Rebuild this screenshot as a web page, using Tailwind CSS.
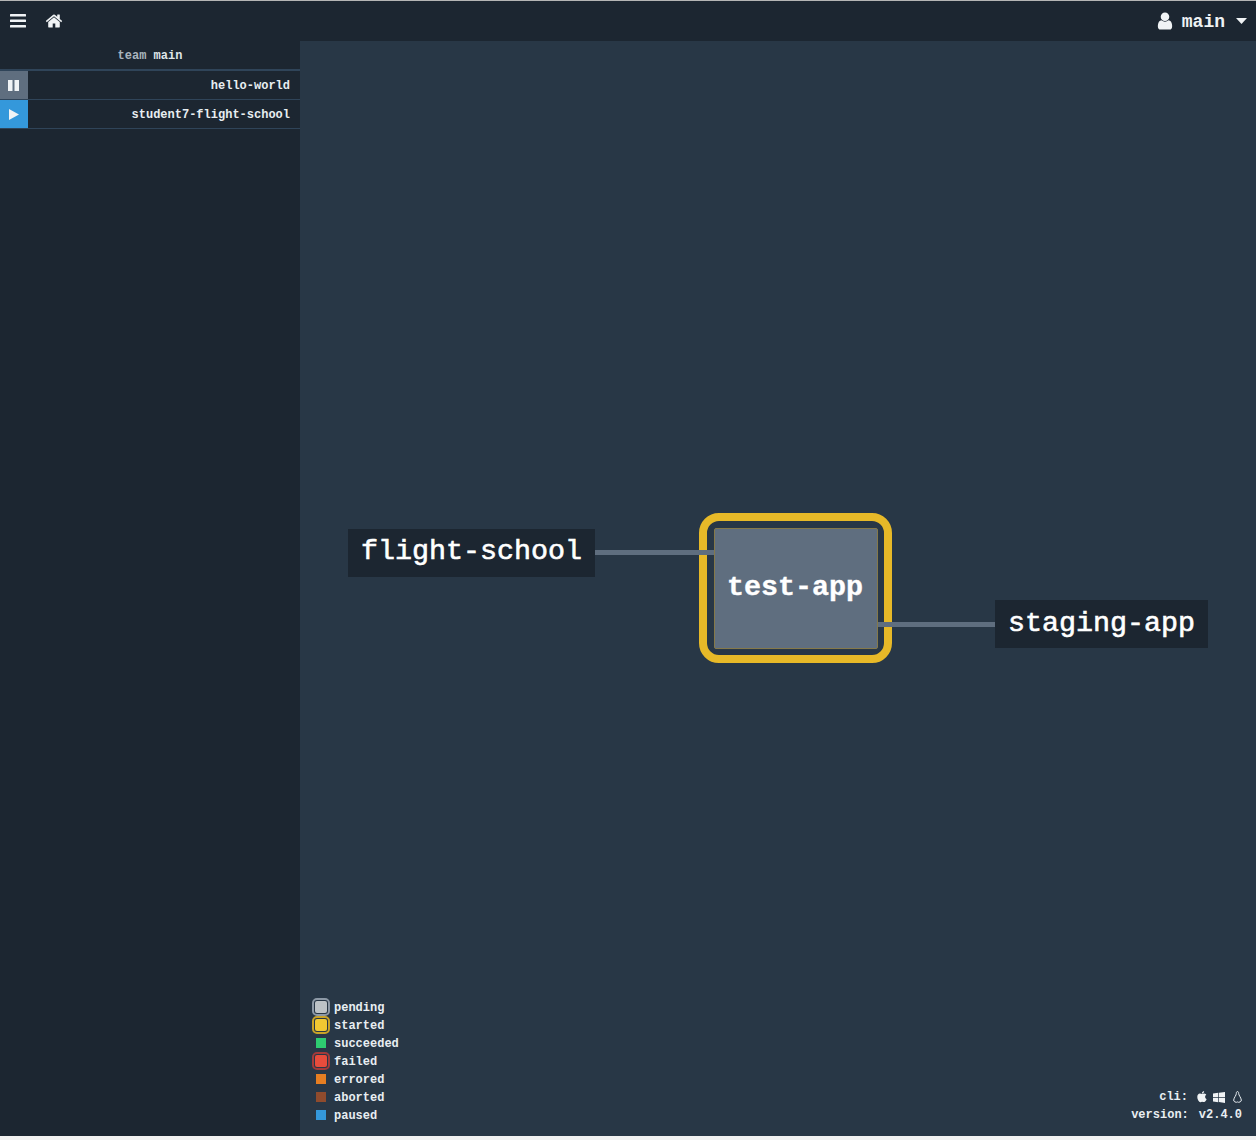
<!DOCTYPE html>
<html lang="en">
<head>
    <meta charset="UTF-8">
    <title>Concourse</title>
    <script src="https://cdn.jsdelivr.net/npm/@tailwindcss/browser@4"></script>
</head>
<body class="bg-[#f2f2f2] font-['Liberation_Mono',monospace] font-bold text-[12px] text-[#e8eef2]">
    <div class="h-[1136px] flex flex-col overflow-hidden">
        <!-- top bar -->
        <header class="h-[41px] shrink-0 bg-[#1c2631] border-t border-[#b5b5b5] flex items-center pl-[10px] pr-[9px]">
            <svg class="w-[16px] h-[14px] fill-[#f0f3f5]" viewBox="0 0 16 14"><rect y="0" width="16" height="2.6" rx=".5"/><rect y="5.5" width="16" height="2.6" rx=".5"/><rect y="11" width="16" height="2.6" rx=".5"/></svg>
            <svg class="w-[18px] h-[18px] ml-[19px] fill-[#f0f3f5]" viewBox="0 0 1792 1792"><path d="M1472 992v480q0 26-19 45t-45 19h-384v-384h-256v384h-384q-26 0-45-19t-19-45v-480q0-1 .5-3t.5-3l575-474 575 474q1 2 1 6zm223-69l-62 74q-8 9-21 11h-3q-13 0-21-7l-692-577-692 577q-12 8-24 7-13-2-21-11l-62-74q-8-10-7-23.5t11-21.5l719-599q32-26 76-26t76 26l244 204v-195q0-14 9-23t23-9h192q14 0 23 9t9 23v408l219 182q10 8 11 21.5t-7 23.5z"/></svg>
            <div class="ml-auto flex items-center">
                <svg class="w-[20px] h-[20px] fill-[#f0f3f5]" viewBox="0 0 1792 1792"><path d="M1536 1399q0 109-62.5 187t-150.5 78h-854q-88 0-150.5-78t-62.5-187q0-85 8.5-160.5t31.5-152 58.5-131 94-89 134.5-34.5q131 128 313 128t313-128q76 0 134.5 34.5t94 89 58.5 131 31.5 152 8.5 160.5zm-256-887q0 159-112.5 271.5t-271.5 112.5-271.5-112.5-112.5-271.5 112.5-271.5 271.5-112.5 271.5 112.5 112.5 271.5z"/></svg>
                <span class="ml-[7px] pt-[2px] text-[18px] leading-none text-[#eef2f4]">main</span>
                <svg class="w-[11px] h-[6px] ml-[11px] fill-[#f0f3f5]" viewBox="0 0 11 6"><path d="M0 0h11L5.5 6z"/></svg>
            </div>
        </header>

        <div class="flex flex-1 min-h-0">
            <!-- sidebar -->
            <aside class="w-[300px] shrink-0 bg-[#1c2631]">
                <div class="h-[30px] pt-[2px] border-b-2 border-[#2f4459] flex items-center justify-center">
                    <span class="text-[#a9b4bd]">team&nbsp;<span class="text-[#dfe5ea]">main</span></span>
                </div>
                <div class="h-[29px] border-b border-[#2f4459] flex">
                    <div class="w-[28px] bg-[#5f6e7f] flex items-center justify-center">
                        <svg class="w-[11px] h-[11px] mr-[1px] fill-[#f0f3f5]" viewBox="0 0 11 11"><rect x="0" width="4.500" height="11"/><rect x="6.500" width="4.500" height="11"/></svg>
                    </div>
                    <div class="flex-1 pt-[2px] flex items-center justify-end pr-[10px]">hello-world</div>
                </div>
                <div class="h-[29px] border-b border-[#2f4459] flex">
                    <div class="w-[28px] bg-[#3498db] flex items-center justify-center">
                        <svg class="w-[10px] h-[11px] fill-[#f0f3f5]" viewBox="0 0 10 11"><path d="M0 0l10 5.500L0 11z"/></svg>
                    </div>
                    <div class="flex-1 pt-[2px] flex items-center justify-end pr-[10px]">student7-flight-school</div>
                </div>
            </aside>

            <!-- pipeline canvas -->
            <main class="relative flex-1 bg-[#283746] flex items-end justify-between pl-[12px] pr-[14px] pb-[12px]">
                <div class="absolute left-[48px] top-[488px] h-[48px] w-[247px] pb-[2px] bg-[#1c2631] flex items-center justify-center text-[28.33px] font-normal text-white [-webkit-text-stroke:0.6px_white]">flight-school</div>

                <div class="absolute left-[399px] top-[472px] w-[193px] h-[150px] rounded-[20px] border-[8px] border-[#e7b928]"></div>
                <div class="absolute left-[414px] top-[487px] w-[164px] h-[121px] pr-[2px] bg-[#5f6e7f] border border-[#85794a] rounded-[2px] flex items-center justify-center text-[28.33px] text-white [-webkit-text-stroke:0.4px_white]">test-app</div>

                <div class="absolute left-[295px] top-[509px] w-[119px] h-[5px] bg-[#5f6e7f]"></div>
                <div class="absolute left-[578px] top-[581px] w-[117px] h-[5px] bg-[#5f6e7f]"></div>

                <div class="absolute left-[695px] top-[559px] h-[48px] w-[213px] bg-[#1c2631] flex items-center justify-center text-[28.33px] font-normal text-white [-webkit-text-stroke:0.6px_white]">staging-app</div>

                <!-- legend -->
                <ul class="relative flex flex-col">
                    <li class="h-[18px] flex items-center gap-[4px]">
                        <span class="w-[18px] h-[18px] rounded-[5px] border-2 border-[#8d99a6] flex items-center justify-center"><span class="w-[12px] h-[12px] rounded-[2px] bg-[#bdc3c7]"></span></span><span class="pt-[2px]">pending</span>
                    </li>
                    <li class="h-[18px] flex items-center gap-[4px]">
                        <span class="w-[18px] h-[18px] rounded-[5px] border-2 border-[#c9a227] flex items-center justify-center"><span class="w-[12px] h-[12px] rounded-[2px] bg-[#f1c832]"></span></span><span class="pt-[2px]">started</span>
                    </li>
                    <li class="h-[18px] flex items-center gap-[4px]">
                        <span class="w-[18px] h-[18px] flex items-center justify-center"><span class="w-[10px] h-[10px] bg-[#2ecc71]"></span></span><span class="pt-[2px]">succeeded</span>
                    </li>
                    <li class="h-[18px] flex items-center gap-[4px]">
                        <span class="w-[18px] h-[18px] rounded-[5px] border-2 border-[#a33a3a] flex items-center justify-center"><span class="w-[12px] h-[12px] rounded-[2px] bg-[#e74c3c]"></span></span><span class="pt-[2px]">failed</span>
                    </li>
                    <li class="h-[18px] flex items-center gap-[4px]">
                        <span class="w-[18px] h-[18px] flex items-center justify-center"><span class="w-[10px] h-[10px] bg-[#e67e22]"></span></span><span class="pt-[2px]">errored</span>
                    </li>
                    <li class="h-[18px] flex items-center gap-[4px]">
                        <span class="w-[18px] h-[18px] flex items-center justify-center"><span class="w-[10px] h-[10px] bg-[#8f4b2d]"></span></span><span class="pt-[2px]">aborted</span>
                    </li>
                    <li class="h-[18px] flex items-center gap-[4px]">
                        <span class="w-[18px] h-[18px] flex items-center justify-center"><span class="w-[10px] h-[10px] bg-[#3498db]"></span></span><span class="pt-[2px]">paused</span>
                    </li>
                </ul>

                <!-- cli and version -->
                <div class="relative flex flex-col items-end">
                    <div class="h-[18px] flex items-center">
                        <span>cli:</span>
                        <svg class="w-[12px] h-[12px] ml-[8px] fill-[#f0f3f5]" viewBox="0 0 1792 1792"><path d="M1585 1215q-39 125-123 250-129 196-257 196-49 0-140-32-86-32-151-32-61 0-142 33-81 34-132 34-152 0-301-259-147-261-147-503 0-228 113-374 113-144 284-144 72 0 177 30 104 30 138 30 45 0 143-34 102-34 173-34 119 0 213 65 52 36 104 100-79 67-114 118-65 94-65 207 0 124 69 223t158 126zm-376-1173q0 61-29 136-30 75-93 138-54 54-108 72-37 11-104 17 3-149 78-257 74-107 250-148 1 3 2.500 11t2.500 11q0 4 .5 10t.5 10z"/></svg>
                        <svg class="w-[12px] h-[11px] ml-[5px] fill-[#f0f3f5]" viewBox="0 0 12 11"><path d="M0 1.600L5.300.8v4.300H0zM6 .7L12 0v5.100H6zM0 5.800h5.300v4.400L0 9.400zM6 5.800h6V11l-6-.9z"/></svg>
                        <svg class="w-[9px] h-[12px] ml-[8px] fill-none stroke-[#e8eef2]" viewBox="0 0 9 12"><path d="M4.500.6C3.500.6 3.300 1.500 3.300 2.600 3.300 4.300 1 6.500.7 9c-.1.900.3 1.500 1.100 1.800l1.500.6c.5-.6 1.900-.6 2.400 0l1.500-.6c.8-.3 1.200-.9 1.100-1.800C8 6.500 5.700 4.300 5.700 2.600 5.700 1.500 5.500.6 4.500.6z"/></svg>
                    </div>
                    <div class="h-[18px] flex items-center">version:<span class="ml-[10px]">v2.4.0</span></div>
                </div>
            </main>
        </div>
    </div>
</body>
</html>
